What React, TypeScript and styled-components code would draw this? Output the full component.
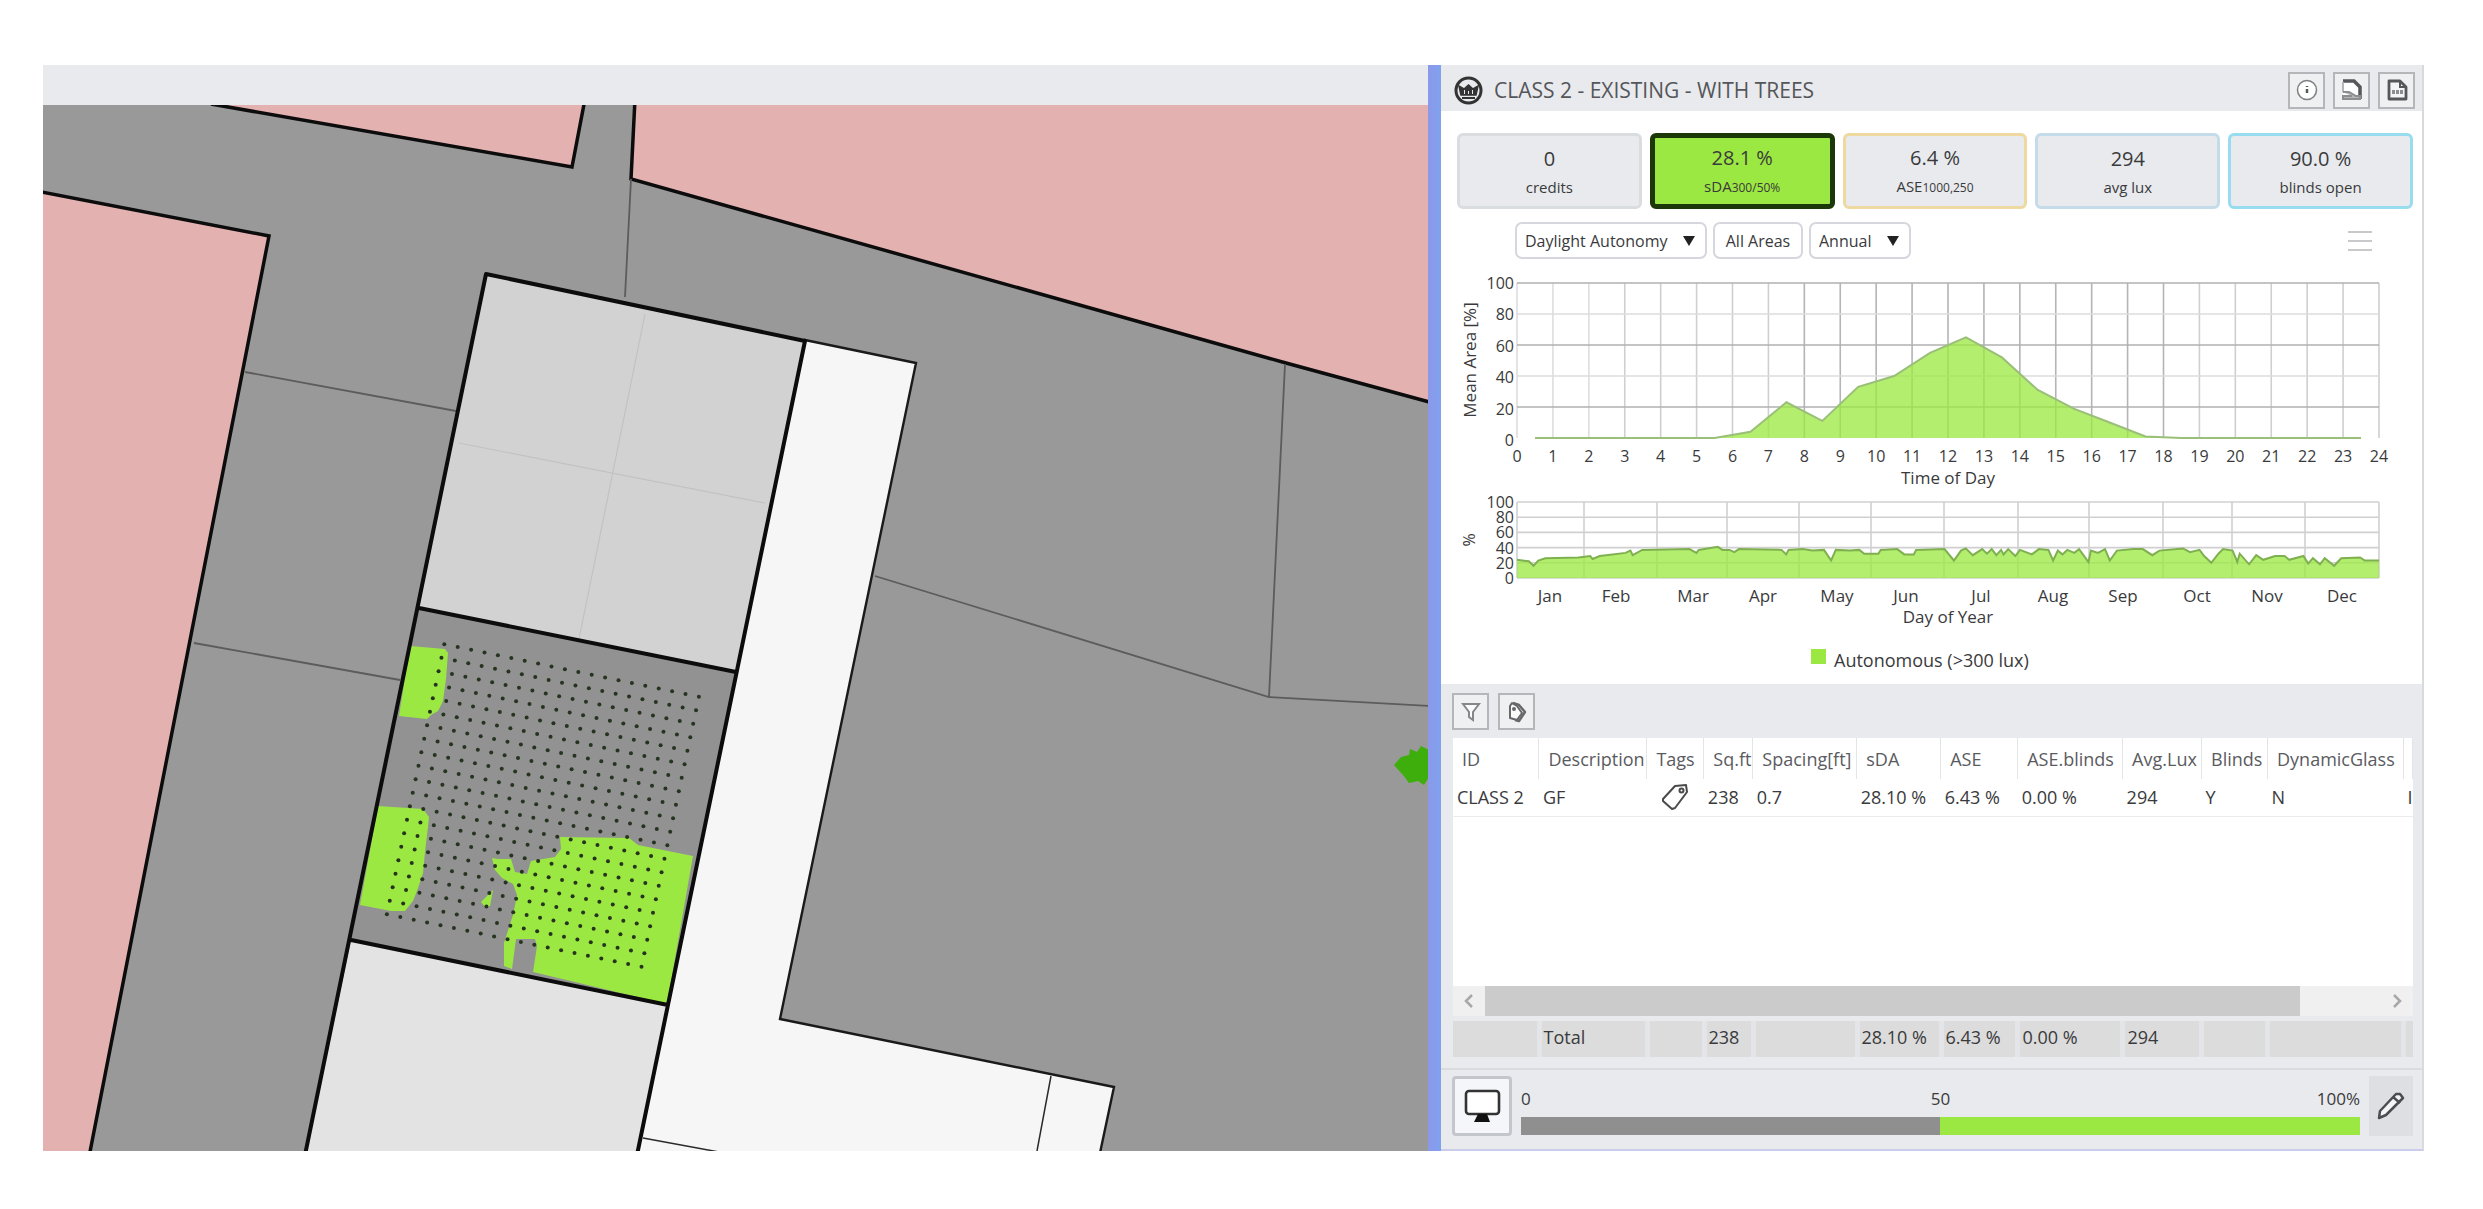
import React from "react";
import styled, { createGlobalStyle } from "styled-components";

const GlobalStyle = createGlobalStyle`
  * { box-sizing: border-box; }
  body { margin: 0; background: #fff; }
  body, button, select { font-family: "Open Sans", "Noto Sans", sans-serif; color: #3a3a3c; }
`;

const bar = "#e8eaed";
const lime = "#9ce842";

/* ---------- shell ---------- */

const Page = styled.div`
  min-height: 100vh;
  padding: 65px 59px 59px 43px;
  display: flex;
`;

const Workspace = styled.div`
  flex: 1;
  display: grid;
  grid-template-columns: minmax(0, 1385fr) 13px minmax(0, 983fr);
`;

const Viewport = styled.main`
  display: flex;
  flex-direction: column;
  min-width: 0;
`;

const ViewportBar = styled.div`
  height: 40px;
  background: ${bar};
`;

const MapDrawing = styled.svg`
  display: block;
  flex: 1;
  width: 100%;
  min-height: 0;
  background: #999;
`;

const Splitter = styled.div`
  background: linear-gradient(90deg, #8c98ea, #7fa2ee);
`;

const Panel = styled.aside`
  display: flex;
  flex-direction: column;
  border-right: 2px solid #d8dade;
  border-bottom: 2px solid #c9cdea;
  background: ${bar};
  min-width: 0;
`;

/* ---------- header ---------- */

const Header = styled.header`
  display: flex;
  align-items: center;
  gap: 11px;
  height: 46px;
  padding: 4px 7px 0 13px;
`;

const Title = styled.h1`
  flex: 1;
  margin: 0;
  font-size: 21px;
  line-height: 32px;
  font-weight: 400;
  color: #55565a;
  white-space: nowrap;
`;

const Actions = styled.div`
  display: flex;
  gap: 8px;
`;

const IconButton = styled.button`
  display: grid;
  place-items: center;
  width: 37px;
  height: 37px;
  padding: 0;
  border: 2px solid #b4b6ba;
  background: #eef0f2;
`;

/* ---------- results ---------- */

const Results = styled.section`
  background: #fff;
  padding: 22px 9px 0 16px;
`;

const Metrics = styled.div`
  display: grid;
  grid-template-columns: repeat(5, minmax(0, 1fr));
  gap: 8px;
`;

const Metric = styled.button<{ $border: string; $active?: boolean }>`
  height: 76px;
  padding: 4px 0 0;
  border: ${(p) => (p.$active ? 5 : 3)}px solid ${(p) => p.$border};
  border-radius: 6px;
  background: ${(p) => (p.$active ? lime : bar)};
  text-align: center;
`;

const MetricValue = styled.span`
  display: block;
  font-size: 20px;
  line-height: 28px;
`;

const MetricLabel = styled.span`
  display: block;
  font-size: 15px;
  line-height: 28px;
`;

const Small = styled.small`
  font-size: 12px;
`;

const Filters = styled.div`
  display: flex;
  align-items: center;
  gap: 6px;
  margin-top: 13px;
  padding: 0 41px 0 58px;
`;

const Dropdown = styled.label`
  display: grid;
  grid-template-areas: "stack";
  align-items: center;

  & > svg {
    grid-area: stack;
    justify-self: end;
    margin-right: 12px;
    pointer-events: none;
  }
`;

const Select = styled.select<{ $width: number }>`
  grid-area: stack;
  width: ${(p) => p.$width}px;
  height: 37px;
  padding: 0 36px 0 8px;
  appearance: none;
  border: 2px solid #d6d6de;
  border-radius: 7px;
  background: #fff;
  font-size: 16px;
`;

const AreasButton = styled.button`
  width: 90px;
  height: 37px;
  padding: 0;
  border: 2px solid #d6d6de;
  border-radius: 7px;
  background: #fff;
  font-size: 16px;
`;

const MenuButton = styled.button`
  display: grid;
  gap: 7px;
  width: 24px;
  margin-left: auto;
  padding: 0;
  border: 0;
  background: none;
`;

const MenuLine = styled.span`
  height: 2px;
  background: #c9c9cb;
`;

const ChartDrawing = styled.svg`
  display: block;
  width: calc(100% + 25px);
  margin: 3px -9px 0 -16px;
  font-family: "Open Sans", "Noto Sans", sans-serif;
  font-size: 16px;
  fill: #3a3a3c;
`;

/* ---------- table ---------- */

const TableTools = styled.div`
  display: flex;
  gap: 9px;
  height: 54px;
  padding: 9px 11px 0;
`;

const TableArea = styled.section`
  flex: 1;
  display: flex;
  flex-direction: column;
  padding: 0 9px 11px 12px;
  border-bottom: 2px solid #d9dbde;
`;

const Grid = styled.div`
  flex: 1;
  background: #fff;
  overflow: hidden;
`;

const Table = styled.table`
  width: 100%;
  table-layout: fixed;
  border-collapse: collapse;
  font-size: 18px;
  line-height: 24px;
  text-align: left;
  white-space: nowrap;
`;

const Col = styled.col<{ $share: number }>`
  width: ${(p) => (p.$share / 960) * 100}%;
`;

const HeadCell = styled.th`
  height: 41px;
  padding: 0 0 0 9px;
  border-right: 1px solid #e4e5e8;
  font-weight: 400;
  color: #5a5b60;
`;

const Cell = styled.td`
  height: 37px;
  padding: 0 0 0 4px;
  border-bottom: 1px solid #ececee;
  overflow: hidden;

  & svg { display: block; margin-left: 10px; }
`;

const Scrollbar = styled.div`
  display: flex;
  align-items: stretch;
  height: 30px;
  background: #f0f0f1;
`;

const ScrollArrow = styled.button`
  display: grid;
  place-items: center;
  width: 32px;
  padding: 0;
  border: 0;
  background: none;
`;

const ScrollTrack = styled.div`
  flex: 1;
`;

const ScrollThumb = styled.div`
  width: 91%;
  height: 100%;
  background: #cbcbcb;
`;

const Totals = styled.div`
  padding-top: 5px;
`;

const TotalCell = styled.td`
  height: 36px;
  padding: 0 0 4px 2px;
  border-right: 5px solid #e4e5e8;
  background: #dcdcdc;

  &:last-child { border-right: 0; }
`;

/* ---------- scale ---------- */

const Footer = styled.footer`
  display: grid;
  grid-template-columns: 60px minmax(0, 1fr) 44px;
  gap: 9px;
  height: 79px;
  padding: 6px 9px 0 11px;
`;

const ScreenButton = styled.button`
  display: grid;
  place-items: center;
  height: 60px;
  padding: 0;
  border: 3px solid #c3c6ca;
  border-radius: 4px;
  background: #f4f6f9;
`;

const EditButton = styled.button`
  display: grid;
  place-items: center;
  height: 60px;
  padding: 0;
  border: 0;
  background: #dddfe2;
`;

const Scale = styled.div`
  padding-top: 11px;
`;

const ScaleLabels = styled.div`
  display: grid;
  grid-template-columns: 1fr 1fr 1fr;
  height: 30px;
  font-size: 17px;
  line-height: 24px;

  & > :nth-child(2) { text-align: center; }
  & > :nth-child(3) { text-align: right; }
`;

const ScaleBar = styled.div`
  height: 18px;
  background: linear-gradient(90deg, #8f8f8f 50%, ${lime} 50%);
`;

/* ---------- site map ---------- */

const sensors: { x: number; y: number }[] = [];
for (let row = 0; row < 21; row++) {
  for (let col = 0; col < 20; col++) {
    sensors.push({
      x: 401.3 + col * 13.4 - row * 2.87,
      y: 539.3 + col * 2.76 + row * 13.5,
    });
  }
}

function SiteMap() {
  return (
    <MapDrawing
      viewBox="0 0 1385 1046"
      preserveAspectRatio="xMidYMid slice"
      role="img"
      aria-label="Site plan"
    >
      <g fill="#e4b1b1" stroke="#0c0c0c" strokeWidth="3.5">
        <path d="M168 -1L529 62L542 -6" />
        <path d="M592 -6L588 74L1243 258L1390 298V-6Z" />
        <path d="M-6 86L226 131L46 1052H-6Z" />
      </g>
      <g fill="none" stroke="#5c5c5c" strokeWidth="1.8">
        <path d="M588 74L582 192M202 267L413 306M151 538L357 575M832 471L1226 592L1386 601M1242 259L1226 592" />
      </g>
      <path d="M762 235L873 258L737 914L1071 982L1057 1048H593Z" fill="#f6f6f6" stroke="#1a1a1a" strokeWidth="2.4" />
      <path d="M1008 971L994 1046M600 1033L676 1047" stroke="#2a2a2a" strokeWidth="1.5" />
      <path d="M443 169L762 236L693 567L376 503Z" fill="#d2d2d2" />
      <path d="M602 209L536 534M416 338L722 398" stroke="#c2c2c2" strokeWidth="1.2" />
      <path d="M376 503L693 567L625 900L308 835Z" fill="#929292" />
      <path d="M308 835L625 900L594 1050H263Z" fill="#e3e3e3" />
      <g fill={lime}>
        <path d="M367 541L402 544L405 548L403 574L400 596L395 606L388 610L384 614L356 611Z" />
        <path d="M335 701L380 704L386 712L385 722L382 747L380 768L374 786L370 796L362 806L348 806L317 800Z" />
        <path d="M517 732L586 733L595 740L650 751L624 899L490 867L494 841L492 834L473 834L469 864L461 861L461 838L470 810L474 790L470 779L459 773L452 765L449 753L455 754L468 754L472 767L484 769L488 756L512 752L518 744Z" />
        <path d="M438 797L450 785L447 801L443 803Z" />
      </g>
      <g fill="#25331f">
        {sensors.map((s, i) => (
          <circle key={i} cx={s.x} cy={s.y} r="2" />
        ))}
      </g>
      <g fill="none" stroke="#0c0c0c" strokeWidth="4" strokeLinejoin="round">
        <path d="M262 1050L443 169L762 236L594 1050M376 503L693 567M308 835L625 900" />
      </g>
      <path d="M1351 660L1358 652L1366 650L1367 644L1374 647L1378 641L1386 645V672L1381 680L1375 676L1366 678L1360 670Z" fill="#3dae0c" />
    </MapDrawing>
  );
}

/* ---------- charts ---------- */

const LEFT = 76;
const RIGHT = 938;

const hourly = [
  [0.5, 0], [5.5, 0], [6.5, 4], [7.5, 23], [8.5, 11], [9.5, 33], [10.5, 40], [11.5, 55],
  [12.5, 65], [13.5, 52], [14.5, 31], [15.5, 19], [16.5, 10], [17.5, 1], [18.5, 0], [23.5, 0],
];

const daily = [
  [0, 24], [5, 22], [7, 16], [9, 23], [12, 26], [26, 27], [31, 29], [32, 25], [35, 29], [46, 33],
  [48, 36], [49, 30], [53, 37], [73, 38], [76, 33], [77, 37], [85, 41], [87, 37], [90, 37], [92, 34],
  [94, 38], [112, 37], [114, 31], [115, 37], [121, 38], [125, 36], [130, 37], [133, 23], [135, 37],
  [141, 36], [145, 37], [147, 32], [153, 32], [154, 37], [161, 38], [164, 31], [168, 31], [169, 37],
  [181, 38], [185, 23], [188, 36], [190, 39], [193, 30], [197, 38], [199, 32], [201, 38], [203, 30],
  [205, 37], [206, 31], [208, 38], [211, 29], [213, 37], [218, 31], [221, 38], [225, 37], [227, 23],
  [229, 36], [231, 31], [233, 37], [236, 33], [238, 38], [242, 21], [243, 36], [246, 33], [249, 38],
  [251, 23], [254, 36], [261, 38], [265, 38], [269, 30], [272, 36], [282, 39], [285, 34], [289, 37],
  [291, 29], [294, 20], [297, 32], [299, 38], [303, 36], [305, 21], [306, 32], [310, 18], [313, 30],
  [316, 24], [321, 29], [325, 29], [327, 24], [333, 29], [335, 19], [337, 26], [340, 18], [342, 26],
  [346, 16], [349, 26], [357, 27], [359, 23], [365, 23],
];

const months = [
  ["Jan", 109], ["Feb", 175], ["Mar", 252], ["Apr", 322], ["May", 396], ["Jun", 465],
  ["Jul", 540], ["Aug", 612], ["Sep", 682], ["Oct", 756], ["Nov", 826], ["Dec", 901],
] as const;
const monthLines = [76, 143, 216, 286, 358, 430, 503, 577, 648, 722, 791, 864, 938];
const levels = [0, 20, 40, 60, 80, 100];

function trace(points: number[][], span: number, top: number, bottom: number) {
  return points
    .map(([x, y]) => {
      const px = LEFT + (x / span) * (RIGHT - LEFT);
      const py = bottom - (y / 100) * (bottom - top);
      return `${px.toFixed(1)} ${py.toFixed(1)}`;
    })
    .join("L");
}

function Area(p: { points: number[][]; span: number; top: number; bottom: number; line: string }) {
  const line = trace(p.points, p.span, p.top, p.bottom);
  const start = LEFT + (p.points[0][0] / p.span) * (RIGHT - LEFT);
  const end = LEFT + (p.points[p.points.length - 1][0] / p.span) * (RIGHT - LEFT);
  return (
    <>
      <path d={`M${start} ${p.bottom}L${line}L${end} ${p.bottom}Z`} fill={lime} fillOpacity="0.76" />
      <path d={`M${line}`} fill="none" stroke={p.line} strokeWidth="2" />
    </>
  );
}

function Charts() {
  const hours = Array.from({ length: 25 }, (_, i) => i);
  const hourX = (h: number) => LEFT + (h / 24) * (RIGHT - LEFT);
  return (
    <ChartDrawing viewBox="0 0 981 422" role="img" aria-label="Daylight autonomy by time of day and day of year">
      <g strokeWidth="1.6">
        {hours.map((h) => (
          <path key={h} d={`M${hourX(h)} 21V176`} stroke={h < 3 ? "#dedee0" : h < 8 || h > 18 ? "#cecfd1" : "#b4b4b6"} />
        ))}
        {levels.slice(1).map((v) => (
          <path key={v} d={`M${LEFT} ${176 - v * 1.55}H${RIGHT}`} stroke={v === 40 || v === 80 ? "#dcdcde" : "#b0b0b2"} />
        ))}
      </g>
      <Area points={hourly} span={24} top={21} bottom={176} line="#9abf78" />
      <g textAnchor="end">
        {levels.map((v) => (
          <text key={v} x={73} y={184 - v * 1.57}>{v}</text>
        ))}
      </g>
      <g textAnchor="middle">
        {hours.map((h) => (
          <text key={h} x={hourX(h)} y={200}>{h}</text>
        ))}
        <text x={507} y={222} fontSize="17">Time of Day</text>
        <text transform="translate(35 98) rotate(-90)" fontSize="17">Mean Area [%]</text>
      </g>

      <g stroke="#d0d0d2" strokeWidth="1.6">
        {monthLines.map((x) => (
          <path key={x} d={`M${x} 240V316`} />
        ))}
        {levels.map((v) => (
          <path key={v} d={`M${LEFT} ${316 - v * 0.76}H${RIGHT}`} />
        ))}
      </g>
      <Area points={daily} span={365} top={240} bottom={316} line="#7fb050" />
      <g textAnchor="end">
        {levels.map((v) => (
          <text key={v} x={73} y={322 - v * 0.76}>{v}</text>
        ))}
      </g>
      <g textAnchor="middle">
        {months.map(([name, x]) => (
          <text key={name} x={x} y={340} fontSize="17">{name}</text>
        ))}
        <text x={507} y={361} fontSize="17">Day of Year</text>
        <text transform="translate(34 278) rotate(-90)">%</text>
      </g>
      <rect x="370" y="387" width="15" height="15" fill={lime} />
      <text x="393" y="405" fontSize="18">Autonomous (&gt;300 lux)</text>
    </ChartDrawing>
  );
}

/* ---------- icons ---------- */

const Logo = () => (
  <svg width="29" height="29" viewBox="0 0 29 29" fill="none" stroke="#333" aria-hidden="true">
    <circle cx="14.5" cy="14.5" r="12.5" strokeWidth="3" />
    <path d="M7 19L5 10L10 13L14.5 9L19 13L24 10L22 19Z" fill="#333" strokeWidth="1.5" />
    <path d="M8 22H21" strokeWidth="2" />
    <path d="M10.5 14V18M14.5 15V18M18.5 14V18" stroke="#e8eaed" strokeWidth="1" />
  </svg>
);

const InfoIcon = () => (
  <svg width="24" height="24" viewBox="0 0 24 24" fill="none" stroke="#7d7f83" strokeWidth="1.5" aria-hidden="true">
    <circle cx="12" cy="12" r="9.5" fill="#fff" />
    <path d="M12 11V15M12 8V9" stroke="#55575b" strokeWidth="2.5" />
  </svg>
);

const ImageFileIcon = () => (
  <svg width="24" height="24" viewBox="0 0 24 24" fill="none" stroke="#55575b" strokeWidth="2" aria-hidden="true">
    <path d="M3 3H14L21 10V21H3Z" fill="#fff" stroke="none" />
    <path d="M3 3H14L20 9V21" strokeWidth="3.5" />
    <path d="M3 4V14" stroke="#b4b6ba" />
    <path d="M3 14L9 14L16 18H20V21H3V18H12" stroke="#8c8e92" fill="#b4b6ba" />
  </svg>
);

const CsvFileIcon = () => (
  <svg width="24" height="24" viewBox="0 0 24 24" fill="none" stroke="#55575b" strokeWidth="2.8" aria-hidden="true">
    <path d="M4 3H15L21 9V21H4Z" fill="#f4f5f6" strokeLinejoin="round" />
    <path d="M15 3V9H21" strokeWidth="2" />
    <path d="M7 14H18" stroke="#8c8e92" strokeWidth="4" strokeDasharray="3 1" />
  </svg>
);

const FilterIcon = () => (
  <svg width="24" height="24" viewBox="0 0 24 24" fill="#fbfbfc" stroke="#85878b" strokeWidth="2" aria-hidden="true">
    <path d="M4 4H20L14 12V20L10 17V12Z" />
  </svg>
);

const TagsIcon = () => (
  <svg width="24" height="24" viewBox="0 0 24 24" fill="#fbfbfc" stroke="#66686c" strokeWidth="2" strokeLinejoin="round" aria-hidden="true">
    <path d="M5 6L7 3L12 6L17 13L12 20L5 18Z" />
    <path d="M8 3L14 5L20 12L14 21L10 20" fill="none" strokeWidth="2.5" />
    <circle cx="9" cy="9" r="1" />
  </svg>
);

const TagIcon = () => (
  <svg width="28" height="28" viewBox="0 0 28 28" fill="#fff" stroke="#4a4a4d" strokeWidth="2" strokeLinejoin="round" aria-hidden="true">
    <path d="M2 16L14 3L25 2L26 9L14 25L11 26L2 18Z" />
    <circle cx="20.5" cy="7.5" r="2" />
  </svg>
);

const ScreenIcon = () => (
  <svg width="38" height="38" viewBox="0 0 38 38" fill="none" stroke="#333" strokeWidth="2.6" aria-hidden="true">
    <rect x="3" y="4" width="33" height="23" rx="3" fill="#fff" />
    <path d="M15 27H24L27 35H11Z" fill="#111" stroke="none" />
  </svg>
);

const PencilIcon = () => (
  <svg width="30" height="30" viewBox="0 0 30 30" fill="#f4f5f6" stroke="#4c4d50" strokeWidth="2.5" strokeLinejoin="round" aria-hidden="true">
    <path d="M3 27L4 20L20 3H24L27 7L10 24Z" />
    <path d="M17 6L24 12" />
  </svg>
);

const Caret = () => (
  <svg width="12" height="12" viewBox="0 0 12 12" aria-hidden="true">
    <path d="M0 1H12L6 11Z" fill="#222" />
  </svg>
);

const Chevron = ({ d }: { d: string }) => (
  <svg width="10" height="14" viewBox="0 0 10 14" fill="none" stroke="#a8a8ab" strokeWidth="2.5" aria-hidden="true">
    <path d={d} />
  </svg>
);

/* ---------- table data ---------- */

const columns: [string, number][] = [
  ["ID", 86], ["Description", 108], ["Tags", 57], ["Sq.ft", 49], ["Spacing[ft]", 104], ["sDA", 84],
  ["ASE", 77], ["ASE.blinds", 105], ["Avg.Lux", 79], ["Blinds", 66], ["DynamicGlass", 136], ["", 9],
];
const room = ["CLASS 2", "GF", <TagIcon />, "238", "0.7", "28.10 %", "6.43 %", "0.00 %", "294", "Y", "N", "I"];
const totals = ["", "Total", "", "238", "", "28.10 %", "6.43 %", "0.00 %", "294", "", "", ""];

const Columns = () => (
  <colgroup>
    {columns.map(([name, share]) => (
      <Col key={name} $share={share} />
    ))}
  </colgroup>
);

export default function App() {
  return (
    <Page>
      <GlobalStyle />
      <Workspace>
        <Viewport>
          <ViewportBar />
          <SiteMap />
        </Viewport>
        <Splitter />
        <Panel>
          <Header>
            <Logo />
            <Title>CLASS 2 - EXISTING - WITH TREES</Title>
            <Actions>
              <IconButton aria-label="Information"><InfoIcon /></IconButton>
              <IconButton aria-label="Save image"><ImageFileIcon /></IconButton>
              <IconButton aria-label="Export data"><CsvFileIcon /></IconButton>
            </Actions>
          </Header>

          <Results>
            <Metrics>
              <Metric $border="#dadde0">
                <MetricValue>0</MetricValue>
                <MetricLabel>credits</MetricLabel>
              </Metric>
              <Metric $border="#1c3808" $active>
                <MetricValue>28.1 %</MetricValue>
                <MetricLabel>sDA<Small>300/50%</Small></MetricLabel>
              </Metric>
              <Metric $border="#eed9a0">
                <MetricValue>6.4 %</MetricValue>
                <MetricLabel>ASE<Small>1000,250</Small></MetricLabel>
              </Metric>
              <Metric $border="#c4dcea">
                <MetricValue>294</MetricValue>
                <MetricLabel>avg lux</MetricLabel>
              </Metric>
              <Metric $border="#97dcef">
                <MetricValue>90.0 %</MetricValue>
                <MetricLabel>blinds open</MetricLabel>
              </Metric>
            </Metrics>
            <Filters>
              <Dropdown>
                <Select $width={192} aria-label="Metric"><option>Daylight Autonomy</option></Select>
                <Caret />
              </Dropdown>
              <AreasButton>All Areas</AreasButton>
              <Dropdown>
                <Select $width={102} aria-label="Period"><option>Annual</option></Select>
                <Caret />
              </Dropdown>
              <MenuButton aria-label="Chart menu">
                <MenuLine />
                <MenuLine />
                <MenuLine />
              </MenuButton>
            </Filters>
            <Charts />
          </Results>

          <TableTools>
            <IconButton aria-label="Filter"><FilterIcon /></IconButton>
            <IconButton aria-label="Tags"><TagsIcon /></IconButton>
          </TableTools>
          <TableArea>
            <Grid>
              <Table>
                <Columns />
                <thead>
                  <tr>
                    {columns.map(([name]) => (
                      <HeadCell key={name} scope="col">{name}</HeadCell>
                    ))}
                  </tr>
                </thead>
                <tbody>
                  <tr>
                    {room.map((value, i) => (
                      <Cell key={i}>{value}</Cell>
                    ))}
                  </tr>
                </tbody>
              </Table>
            </Grid>
            <Scrollbar>
              <ScrollArrow aria-label="Scroll left"><Chevron d="M8 1L2 7L8 13" /></ScrollArrow>
              <ScrollTrack>
                <ScrollThumb />
              </ScrollTrack>
              <ScrollArrow aria-label="Scroll right"><Chevron d="M2 1L8 7L2 13" /></ScrollArrow>
            </Scrollbar>
            <Totals>
              <Table>
                <Columns />
                <tbody>
                  <tr>
                    {totals.map((value, i) => (
                      <TotalCell key={i}>{value}</TotalCell>
                    ))}
                  </tr>
                </tbody>
              </Table>
            </Totals>
          </TableArea>

          <Footer>
            <ScreenButton aria-label="Display"><ScreenIcon /></ScreenButton>
            <Scale>
              <ScaleLabels>
                <span>0</span>
                <span>50</span>
                <span>100%</span>
              </ScaleLabels>
              <ScaleBar />
            </Scale>
            <EditButton aria-label="Edit scale"><PencilIcon /></EditButton>
          </Footer>
        </Panel>
      </Workspace>
    </Page>
  );
}
